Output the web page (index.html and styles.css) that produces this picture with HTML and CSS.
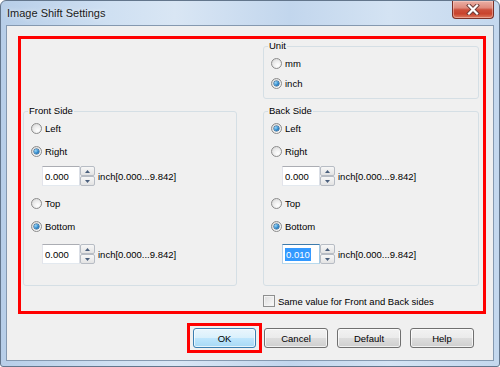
FILE: index.html
```html
<!DOCTYPE html>
<html>
<head>
<meta charset="utf-8">
<title>Image Shift Settings</title>
<link rel="stylesheet" href="styles.css">
</head>
<body>
<div class="window">
  <div class="titlebar">
    <span class="title">Image Shift Settings</span>
    <div class="close">
      <svg width="14" height="11" viewBox="0 0 14 11">
        <path d="M3 1.5 L11 9.5 M11 1.5 L3 9.5" stroke="#6a3a36" stroke-width="4" stroke-linecap="square" fill="none"/>
        <path d="M3 1.5 L11 9.5 M11 1.5 L3 9.5" stroke="#ffffff" stroke-width="2.2" stroke-linecap="square" fill="none"/>
      </svg>
    </div>
  </div>
  <div class="client">
    <div class="highlight">
      <div class="spacer"></div>
      <fieldset class="group unit">
        <legend>Unit</legend>
        <div class="opt"><span class="radio"></span><span>mm</span></div>
        <div class="opt"><span class="radio on"></span><span>inch</span></div>
      </fieldset>
      <fieldset class="group side">
        <legend>Front Side</legend>
        <div class="opt"><span class="radio"></span><span>Left</span></div>
        <div class="opt"><span class="radio on"></span><span>Right</span></div>
        <div class="spin first">
          <div class="input"><span>0.000</span></div>
          <div class="arrows">
            <div class="abtn"><svg width="5" height="3" viewBox="0 0 5 3"><path d="M0 3 L2.5 0 L5 3Z" fill="#4a5f7c"/></svg></div>
            <div class="abtn"><svg width="5" height="3" viewBox="0 0 5 3"><path d="M0 0 L2.5 3 L5 0Z" fill="#4a5f7c"/></svg></div>
          </div>
          <span class="range">inch[0.000...9.842]</span>
        </div>
        <div class="opt top"><span class="radio"></span><span>Top</span></div>
        <div class="opt"><span class="radio on"></span><span>Bottom</span></div>
        <div class="spin second">
          <div class="input"><span>0.000</span></div>
          <div class="arrows">
            <div class="abtn"><svg width="5" height="3" viewBox="0 0 5 3"><path d="M0 3 L2.5 0 L5 3Z" fill="#4a5f7c"/></svg></div>
            <div class="abtn"><svg width="5" height="3" viewBox="0 0 5 3"><path d="M0 0 L2.5 3 L5 0Z" fill="#4a5f7c"/></svg></div>
          </div>
          <span class="range">inch[0.000...9.842]</span>
        </div>
      </fieldset>
      <fieldset class="group side">
        <legend>Back Side</legend>
        <div class="opt"><span class="radio on"></span><span>Left</span></div>
        <div class="opt"><span class="radio"></span><span>Right</span></div>
        <div class="spin first">
          <div class="input"><span>0.000</span></div>
          <div class="arrows">
            <div class="abtn"><svg width="5" height="3" viewBox="0 0 5 3"><path d="M0 3 L2.5 0 L5 3Z" fill="#4a5f7c"/></svg></div>
            <div class="abtn"><svg width="5" height="3" viewBox="0 0 5 3"><path d="M0 0 L2.5 3 L5 0Z" fill="#4a5f7c"/></svg></div>
          </div>
          <span class="range">inch[0.000...9.842]</span>
        </div>
        <div class="opt top"><span class="radio"></span><span>Top</span></div>
        <div class="opt"><span class="radio on"></span><span>Bottom</span></div>
        <div class="spin second">
          <div class="input focus"><span class="sel">0.010</span></div>
          <div class="arrows">
            <div class="abtn"><svg width="5" height="3" viewBox="0 0 5 3"><path d="M0 3 L2.5 0 L5 3Z" fill="#4a5f7c"/></svg></div>
            <div class="abtn"><svg width="5" height="3" viewBox="0 0 5 3"><path d="M0 0 L2.5 3 L5 0Z" fill="#4a5f7c"/></svg></div>
          </div>
          <span class="range">inch[0.000...9.842]</span>
        </div>
      </fieldset>
      <div class="check-row">
        <span class="checkbox"></span><span>Same value for Front and Back sides</span>
      </div>
    </div>
    <div class="actions">
      <div class="ok-mark"><div class="btn default">OK</div></div>
      <div class="btn">Cancel</div>
      <div class="btn">Default</div>
      <div class="btn">Help</div>
    </div>
  </div>
</div>
</body>
</html>
```

FILE: styles.css
```css
* { box-sizing: border-box; }
html, body { margin: 0; padding: 0; }
body {
  width: 500px;
  height: 367px;
  overflow: hidden;
  background: #ffffff;
  font-family: "Liberation Sans", Arial, sans-serif;
  font-size: 9.5px;
  color: #000;
}
.window {
  width: 500px;
  height: 367px;
  display: flex;
  flex-direction: column;
  border: 1px solid #63768c;
  border-radius: 6px 6px 3px 3px;
  background: linear-gradient(to right, #b7cee8 0%, #cfe0f2 22%, #d9e6f4 35%, #c2d6ed 58%, #d4e3f3 78%, #c4d8ee 100%);
  padding: 0 5px 5px 5px;
}
.titlebar {
  height: 24px;
  display: flex;
  align-items: center;
  justify-content: space-between;
  padding-left: 1px;
}
.title {
  font-size: 11px;
  color: #1b1b1b;
  text-shadow: 0 0 5px rgba(255,255,255,0.9);
}
.close {
  align-self: flex-start;
  width: 42px;
  height: 18px;
  border: 1px solid #7b3027;
  border-top: none;
  border-radius: 0 0 4px 4px;
  background: linear-gradient(#eab0a5 0%, #df8a7c 40%, #cc4f3b 52%, #c9432d 75%, #dd7a5f 100%);
  box-shadow: inset 0 0 0 1px rgba(255,220,210,0.45);
  display: flex;
  align-items: center;
  justify-content: center;
}
.client {
  flex: 1;
  border: 1px solid #8599b0;
  background: #f0f0f0;
  padding: 10px 0 0 11px;
}
.highlight {
  width: 468px;
  height: 278px;
  border: 3px solid #ff0000;
  display: grid;
  grid-template-columns: 214px 216px;
  column-gap: 26px;
  align-content: start;
  padding-left: 2px;
}
.group {
  margin: 0;
  padding: 0 7px;
  border: 1px solid #d5dfe5;
  border-radius: 3px;
  min-width: 0;
}
.group legend {
  padding: 0 1px;
  margin-left: -3px;
  line-height: 12px;
  color: #000;
}
.unit {
  margin-top: 1px;
  padding-top: 1px;
  padding-bottom: 5px;
}
.side {
  margin-top: 6px;
  padding-bottom: 21px;
}
.opt {
  display: flex;
  align-items: center;
  gap: 3px;
  height: 20px;
}
.side .opt { height: 23px; }
.radio {
  width: 11px;
  height: 11px;
  border-radius: 50%;
  border: 1px solid #8c8c8c;
  background: radial-gradient(circle at 65% 70%, #ffffff 0%, #eeeeee 45%, #d0d0d0 100%);
  display: flex;
  align-items: center;
  justify-content: center;
  flex: none;
}
.radio.on::after {
  content: "";
  width: 5px;
  height: 5px;
  border-radius: 50%;
  background: radial-gradient(circle at 35% 35%, #9ad8fa 0%, #2b85c8 55%, #0f4e8a 100%);
  box-shadow: 0 0 0 0.5px #1a4f7e;
}
.spin {
  display: flex;
  align-items: center;
  height: 20px;
  margin-left: 11px;
}
.spin.first { margin-top: 3px; margin-bottom: 6px; }
.spin.second { margin-top: 6px; }
.input {
  width: 38px;
  height: 20px;
  border: 1px solid;
  border-color: #abadb3 #dbdfe6 #e3e9ef #e2e3ea;
  background: #ffffff;
  padding-left: 2px;
  display: flex;
  align-items: center;
}
.input.focus {
  border-color: #3d7bad #a4c9e3 #b7d9ed #b5cfe7;
}
.sel {
  background: #3399ff;
  color: #ffffff;
  line-height: 13px;
  padding: 0 1px;
}
.arrows {
  width: 15px;
  height: 20px;
  display: flex;
  flex-direction: column;
}
.abtn {
  flex: 1;
  border: 1px solid #b7bcc4;
  border-radius: 2px;
  background: linear-gradient(#f7f7f7, #e3e3e3);
  display: flex;
  align-items: center;
  justify-content: center;
}
.range { margin-left: 3px; }
.check-row {
  grid-column: 2;
  display: flex;
  align-items: center;
  gap: 3px;
  height: 12px;
  margin-top: 9px;
}
.checkbox {
  width: 12px;
  height: 12px;
  border: 1px solid #8e8f8f;
  background: linear-gradient(135deg, #dcdcdc, #fbfbfb);
  box-shadow: inset 0 0 0 1px #f4f4f4;
  flex: none;
}
.actions {
  display: flex;
  justify-content: flex-end;
  align-items: center;
  gap: 9px;
  margin-top: 9px;
  padding-right: 19px;
}
.ok-mark {
  border: 3px solid #ff0000;
  padding: 2px 3px;
  margin-right: -7px;
}
.btn {
  width: 64px;
  height: 20px;
  border: 1px solid #707070;
  border-radius: 3px;
  background: linear-gradient(#f2f2f2 0%, #ebebeb 50%, #dddddd 51%, #cfcfcf 100%);
  box-shadow: inset 0 0 0 1px rgba(255,255,255,0.7);
  display: flex;
  align-items: center;
  justify-content: center;
}
.btn.default {
  width: 63px;
  border-color: #3c7fb1;
  background: linear-gradient(#eaf6fd 0%, #d9f0fc 50%, #bee6fd 51%, #a7d9f5 100%);
}
```
